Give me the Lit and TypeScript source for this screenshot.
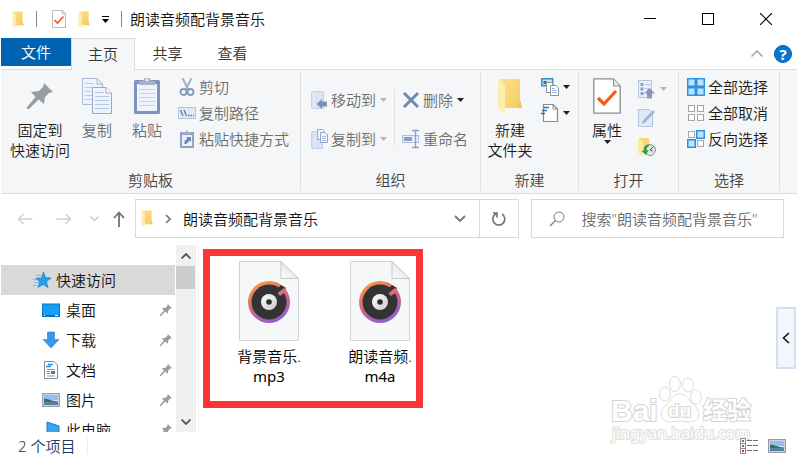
import { LitElement, html, svg, css, nothing, TemplateResult } from "lit";
import { customElement, property } from "lit/decorators.js";
import { classMap } from "lit/directives/class-map.js";

const FOLDER_NAME = "朗读音频配背景音乐";

const icon = (w: number, h: number, body: unknown) => html`
  <svg width=${w} height=${h} viewBox="0 0 ${w} ${h}" fill="none" aria-hidden="true">${body}</svg>`;

const folder = (w: number, h: number) => html`
  <svg width=${w} height=${h} viewBox="0 0 26 36" preserveAspectRatio="none" aria-hidden="true">
    <defs><linearGradient id="fo" x1="0" y1="0" x2="1" y2="1">
      <stop offset="0" stop-color="#ffe08a"></stop><stop offset="1" stop-color="#f3cb62"></stop>
    </linearGradient></defs>
    <path d="M3 1H23V23L25 30H8Z" fill="url(#fo)"></path>
    <path d="M1 1L8 7V36L1 31Z" fill="#ffedb0"></path>
    <path d="M23 22L25 30H21Z" fill="#ecc255"></path>
  </svg>`;

const caret = (color = "#1f1f1f") => icon(7, 4, svg`<path d="M0 0H7L3.5 4Z" fill=${color}/>`);

const propsPage = (w: number, h: number) => html`
  <svg width=${w} height=${h} viewBox="0 0 28 36" fill="none" aria-hidden="true">
    <path d="M.8 .8H20.5L27.2 8V35.2H.8Z" fill="#fff" stroke="#8c8c8c" stroke-width="1.3"></path>
    <path d="M20.5 1V8H27" fill="#e8e8e8" stroke="#8c8c8c"></path>
    <path d="M5 20L11 26L23 13" stroke="#f05a1a" stroke-width="3.2"></path>
  </svg>`;

const pinPath = "M17 0L26 9L22 10L18 14L17 21L11.500 16.500L2 26L0 26L0 24L8.500 14L4 9L12 8L16 4Z";
const pin = (s: number) => html`
  <svg width=${s} height=${s} viewBox="0 0 26 26" aria-hidden="true"><path d=${pinPath} fill="#959da5"></path></svg>`;

const copyBig = icon(32, 38, svg`
  <path d="M1.500 1.500H16L21.500 7V27.500H1.500Z" fill="#eef3fb" stroke="#a9b8d6"/>
  <path d="M16 1.500V7H21.500" stroke="#a9b8d6"/>
  <path d="M4 6.500H13M4 10.500H18M4 14.500H18M4 18.500H18M4 22.500H18" stroke="#b9cdea"/>
  <path d="M11.500 10.500H25L30.500 16V36.500H11.500Z" fill="#eef3fb" stroke="#98a9cb"/>
  <path d="M25 10.500V16H30.500" fill="#fff" stroke="#98a9cb"/>
  <path d="M14 15.500H23M14 19.500H28M14 23.500H28M14 27.500H28M14 31.500H28" stroke="#b0c6e6"/>`);

const clipboardBig = icon(28, 38, svg`
  <rect x="1" y="3" width="26" height="34" rx="1.500" fill="#7f94bb"/>
  <rect x="4" y="7" width="20" height="27" fill="#eef3fc"/>
  <path d="M6 12.500H22M6 16.500H22M6 20.500H22M6 24.500H22M6 28.500H22" stroke="#c5d3ea"/>
  <path d="M6 8V4H10L11.500 1H16.500L18 4H22V8Z" fill="#a5b2ca"/>
  <circle cx="14" cy="3" r="1.300" fill="#eef3fc"/>`);

const scissors = icon(18, 18, svg`
  <path d="M4.500 0L10.500 12M13.500 0L7.500 12" stroke="#a3b0c6" stroke-width="2"/>
  <circle cx="5.500" cy="14" r="3" stroke="#8497bd" stroke-width="1.800"/>
  <circle cx="12.500" cy="14" r="3" stroke="#8497bd" stroke-width="1.800"/>`);

const pathIcon = icon(18, 18, svg`
  <rect x=".5" y="3.500" width="17" height="11" fill="#dfe9f8" stroke="#b3c3e0"/>
  <path d="M2.500 6L5 12M6 6L8.500 12M10 11.500H11.500M12.500 11.500H14M15 11.500H16" stroke="#64779c" stroke-width="1.300"/>`);

const pasteLink = icon(18, 20, svg`
  <path d="M2 3H16V19H2Z" fill="#8fa2c7"/><path d="M4 6H14V17H4Z" fill="#eaf1fc"/>
  <path d="M5 5V3H7.500L9 1L10.500 3H13V5Z" fill="#a5b2ca"/>
  <path d="M6.500 15V12L9.500 9.500L8 8H13V13L11.500 11.500L8.500 15Z" fill="#6f86b2"/>`);

const moveTo = icon(18, 20, svg`
  <path d="M1.500 1.500H13.500V18.500H1.500Z" fill="#d9e4f5" stroke="#c3d2ea"/>
  <path d="M1.500 1.500L4 4V19" stroke="#edf3fc"/>
  <path d="M17 11.500V16.500H12V19L6.500 14L12 9V11.500Z" fill="#7d92b8"/>`);

const copyTo = icon(18, 20, svg`
  <path d="M1.500 2.500H12.500V19.500H1.500Z" fill="#d4e1f5" stroke="#c3d2ea"/>
  <path d="M5 4V19" stroke="#edf3fc"/>
  <path d="M7.500 .5H13L14.500 2.500V10.500H7.500Z" fill="#eef3fb" stroke="#9fb0d0"/>
  <path d="M10.500 3.500H15L17.500 6V13.500H10.500Z" fill="#f3f7fd" stroke="#93a5ca"/>
  <path d="M12 7.500H16M12 9.500H16M12 11.500H16" stroke="#a9bce0"/>`);

const cross = icon(18, 18, svg`<path d="M2 2L16 16M16 2L2 16" stroke="#7488b0" stroke-width="3"/>`);

const rename = icon(18, 20, svg`
  <rect x=".5" y="6.500" width="16" height="7" fill="#e6effb" stroke="#aebfdd"/>
  <rect x="2" y="8" width="8" height="4" fill="#8c9fc5"/>
  <path d="M10 1.500H13.500V18.500H10M17 1.500H13.500M13.500 18.500H17" stroke="#8c9fc5" stroke-width="1.400"/>`);

const newItem = icon(18, 18, svg`
  <rect x=".75" y=".75" width="11" height="7" fill="#bfe3f7" stroke="#3f8fbd" stroke-width="1.500"/>
  <rect x="2.500" y="3" width="3" height="3" fill="#3d6f8c"/>
  <path d="M5.500 4.500H11.500V14.500H5.500Z" fill="#fff" stroke="#8d9399"/>
  <path d="M9.500 7.500H15L17.500 10V17.500H9.500Z" fill="#fff" stroke="#8d9399"/>
  <path d="M11 10.500H14M11 12.500H16M11 14.500H16" stroke="#9cb9e8"/>`);

const easyAccess = icon(18, 18, svg`
  <path d="M2.500 .5H12L16.500 5V17.500H2.500Z" fill="#fff" stroke="#858b91" stroke-width="1.200"/>
  <path d="M12 .5V5H16.500" stroke="#858b91"/>
  <path d="M3 3.500H8M1 6.500H6M0 9.500H4" stroke="#2376b5" stroke-width="1.500"/>`);

const openIcon = icon(18, 20, svg`
  <rect x=".5" y="1.500" width="13" height="17" fill="#eaf0fa" stroke="#b4c3de"/>
  <path d="M2.500 4H5.500V7H2.500ZM2.500 8.500H5.500V11.500H2.500ZM2.500 13H5.500V16H2.500Z" fill="#8a9cc2"/>
  <path d="M7 5.500H12M7 9.500H12" stroke="#b4c3de"/>
  <path d="M11.500 9L17 14.500H14V19.500H9V14.500H6Z" fill="#8598bd"/>`);

const editIcon = icon(18, 20, svg`
  <path d="M.5 1.500H11L14.500 5V18.500H.5Z" fill="#dde8f8" stroke="#b4c3de"/>
  <path d="M4 16L5 12.500L15 2L17 4L7 14.500Z" fill="#a3b3d0"/>`);

const historyIcon = icon(18, 20, svg`
  <path d="M1 1H11V16H5Z" fill="#f8d777"/><path d="M0 1L5 4V19L0 16Z" fill="#ffe9a6"/>
  <circle cx="12" cy="13" r="5.500" fill="#dfe3e6" stroke="#8b9196"/>
  <path d="M12 13L15.500 9.500M12 13L14.500 14" stroke="#555" />
  <path d="M11 7.500C7.500 7.500 5 10 6 13.500L3.500 14L8 18L10.500 13L8.500 13.300C8.500 10.500 9.500 9.500 11 9.300Z" fill="#2ca33a"/>`);

const squares = (on: boolean[]) => icon(18, 18, on.map((sel, i) => {
  const x = (i % 2) * 9, y = Math.floor(i / 2) * 9;
  return sel
    ? svg`<rect x=${x + 0.75} y=${y + 0.75} width="7.500" height="7.500" fill="#bfe4ff" stroke="#2b92e4" stroke-width="1.500"/>`
    : svg`<rect x=${x + 1.5} y=${y + 1.5} width="6" height="6" fill="#fcfcfc" stroke="#a6a6a6"/>`;
}));

const star = icon(18, 18, svg`
  <path d="M10.500 1L12.500 6.500L18 7L13.500 10.800L15 16.500L10 13.500L5 16.500L6.500 10.800L3 7H8.500Z" fill="#2a9bea" stroke="#1679c4" stroke-width=".6"/>
  <path d="M3 4.500H8M0 8.500H4M1 11.500H6M0 14.500H4" stroke="#79bdf0"/>`);

const desktop = icon(18, 18, svg`
  <rect x=".5" y="3" width="17" height="12.500" fill="#15a0f5" stroke="#0b76c0"/>
  <path d="M1 14.500H17" stroke="#0869b0"/><path d="M2 14.500H3M13 14.500H16" stroke="#fff"/>`);

const download = icon(18, 18, svg`
  <path d="M5.500 1H12.500V8.500H17L9 17L1 8.500H5.500Z" fill="#3a96e6" stroke="#2a7fc9" stroke-width=".6"/>`);

const docIcon = icon(18, 18, svg`
  <path d="M2.500 .5H12L15.500 4V17.500H2.500Z" fill="#fff" stroke="#8b8b8b"/>
  <path d="M6 3.500H11M4 5.500H9" stroke="#2394dc" stroke-width="1.500"/>
  <path d="M5 8.500H13M5 10.500H8M5 12.500H8M5 15H13" stroke="#8795a5"/>
  <rect x="9" y="10" width="4" height="3" fill="#2b83c0"/>`);

const picture = icon(18, 18, svg`
  <rect x=".75" y="2.750" width="16.500" height="12.500" fill="#fff" stroke="#929292" stroke-width="1.300"/>
  <rect x="2" y="4" width="14" height="10" fill="#8fc0f5"/>
  <path d="M2 9H16V11H2Z" fill="#cfe6f8"/>
  <path d="M2 7.500C6 8 10 10 16 10.500V11.500H2Z" fill="#3f6e54"/><path d="M2 11.500H16V14H2Z" fill="#4b7fae"/>`);

const pc = icon(18, 18, svg`<path d="M5 1L17 5V16H5Z" fill="#3aa5ee" stroke="#1f7cc0"/>`);

const disc = html`
  <svg width="60" height="80" viewBox="0 0 60 80" fill="none" aria-hidden="true">
    <defs>
      <linearGradient id="ring" x1=".2" y1="0" x2=".7" y2="1">
        <stop offset="0" stop-color="#ff9a3d"></stop><stop offset=".5" stop-color="#d2687f"></stop>
        <stop offset="1" stop-color="#8560d8"></stop>
      </linearGradient>
      <linearGradient id="hub" x1="0" y1="0" x2="1" y2="1">
        <stop offset="0" stop-color="#fff"></stop><stop offset="1" stop-color="#c9c9c9"></stop>
      </linearGradient>
      <linearGradient id="fold" x1="0" y1="1" x2="1" y2="0">
        <stop offset="0" stop-color="#fdfdfd"></stop><stop offset="1" stop-color="#d9d9d9"></stop>
      </linearGradient>
    </defs>
    <path d="M.5 .5H42L59.500 18V79.500H.5Z" fill="#f6f7f8" stroke="#d3d4d5"></path>
    <path d="M42 .5V17.500H59.500Z" fill="url(#fold)" stroke="#c6c6c6"></path>
    <circle cx="30" cy="41" r="21" fill="url(#ring)"></circle>
    <circle cx="30" cy="41" r="17.500" fill="#333"></circle>
    <path d="M38 28.500L42 24L47 27L43 32Z" fill="#333"></path>
    <path d="M38.500 32L45 27L48 30L41 35Z" fill="#d9707d"></path>
    <circle cx="30" cy="41" r="8" fill="url(#hub)"></circle>
    <circle cx="30" cy="41" r="2.800" fill="#2b2b2b"></circle>
  </svg>`;

const shared = css`
  * { box-sizing: border-box; }
  button, input {
    font: inherit;
    color: inherit;
    background: none;
    border: 0;
    margin: 0;
    padding: 0;
  }
  svg { display: block; flex: none; }
`;

@customElement("ribbon-button")
class RibbonButton extends LitElement {
  @property({ attribute: false }) icon: TemplateResult | null = null;
  @property({ attribute: false }) lines: string[] = [];
  @property() label = "";
  @property({ type: Boolean }) big = false;
  @property({ type: Boolean }) menu = false;
  @property({ type: Boolean }) off = false;
  static styles = [shared, css`
    :host { display: block; }
    button { display: flex; align-items: center; height: 100%; gap: 3px; line-height: 20px; white-space: nowrap; }
    .off { color: #6d6d6d; }
    .big { flex-direction: column; gap: 0; padding: 8px 2px 0; min-width: 50px; height: auto; }
    .art { display: flex; align-items: center; justify-content: center; min-width: 18px; }
    .big .art { height: 38px; margin-bottom: 5px; }
    .line { display: block; }
    .menu { display: flex; padding-left: 1px; }
    .big .menu { padding: 0; }
  `];
  render() {
    return html`
      <button class=${classMap({ big: this.big, off: this.off })} ?disabled=${this.off} aria-label=${this.label || this.lines.join("")}>
        <span class="art">${this.icon}</span>
        ${this.lines.length ? html`<span>${this.lines.map((l) => html`<span class="line">${l}</span>`)}</span>` : nothing}
        ${this.menu ? html`<span class="menu">${caret(this.off ? "#b5b5b5" : "#1f1f1f")}</span>` : nothing}
      </button>`;
  }
}

@customElement("explorer-ribbon")
class ExplorerRibbon extends LitElement {
  static styles = [shared, css`
    :host {
      display: flex;
      background: #f5f6f7;
      border-top: 1px solid #d9dbdd;
      border-bottom: 1px solid #d9dbdd;
      height: 125px;
      padding: 2px 0;
      color: #1c1c1c;
    }
    section { display: flex; flex-direction: column; flex: none; border-right: 1px solid #dddfe1; }
    .tools { display: flex; flex: 1; margin-top: -3px; }
    h2 { margin: 0; padding-bottom: 1px; font-size: 15px; font-weight: inherit; line-height: 20px; text-align: center; color: #444; }
    .stack { display: grid; align-content: start; grid-auto-rows: 26px; padding-top: 5px; }
    .tall { grid-auto-rows: 29px; }
    .spread { row-gap: 13px; padding-top: 18px; }
    .rule { width: 1px; height: 56px; margin: 21px 7px 0; background: #dddfe1; }
    .clip { padding: 0 11px 0 7px; }
    .org { padding: 0 12px 0 9px; }
    .make { padding: 0 8px 0 4px; }
    .open { padding: 0 11px 0 3px; }
    .pick { padding: 0 11px 0 8px; }
    .next { margin-left: 6px; }
    .soft { color: #6d6d6d; }
  `];
  render() {
    return html`
      <section>
        <div class="tools clip">
          <ribbon-button big .icon=${pin(26)} .lines=${["固定到", "快速访问"]}></ribbon-button>
          <ribbon-button big off .icon=${copyBig} .lines=${["复制"]}></ribbon-button>
          <ribbon-button big off .icon=${clipboardBig} .lines=${["粘贴"]}></ribbon-button>
          <div class="stack next">
            <ribbon-button off .icon=${scissors} .lines=${["剪切"]}></ribbon-button>
            <ribbon-button off .icon=${pathIcon} .lines=${["复制路径"]}></ribbon-button>
            <ribbon-button off .icon=${pasteLink} .lines=${["粘贴快捷方式"]}></ribbon-button>
          </div>
        </div>
        <h2>剪贴板</h2>
      </section>
      <section>
        <div class="tools org">
          <div class="stack spread">
            <ribbon-button off menu .icon=${moveTo} .lines=${["移动到"]}></ribbon-button>
            <ribbon-button off menu .icon=${copyTo} .lines=${["复制到"]}></ribbon-button>
          </div>
          <div class="rule"></div>
          <div class="stack spread">
            <ribbon-button class="soft" menu .icon=${cross} .lines=${["删除"]}></ribbon-button>
            <ribbon-button off .icon=${rename} .lines=${["重命名"]}></ribbon-button>
          </div>
        </div>
        <h2>组织</h2>
      </section>
      <section>
        <div class="tools make">
          <ribbon-button big .icon=${folder(26, 36)} .lines=${["新建", "文件夹"]}></ribbon-button>
          <div class="stack next">
            <ribbon-button menu label="新建项目" .icon=${newItem}></ribbon-button>
            <ribbon-button menu label="轻松访问" .icon=${easyAccess}></ribbon-button>
          </div>
        </div>
        <h2>新建</h2>
      </section>
      <section>
        <div class="tools open">
          <ribbon-button big menu .icon=${propsPage(28, 36)} .lines=${["属性"]}></ribbon-button>
          <div class="stack tall next">
            <ribbon-button off menu label="打开" .icon=${openIcon}></ribbon-button>
            <ribbon-button off label="编辑" .icon=${editIcon}></ribbon-button>
            <ribbon-button label="历史记录" .icon=${historyIcon}></ribbon-button>
          </div>
        </div>
        <h2>打开</h2>
      </section>
      <section>
        <div class="tools pick">
          <div class="stack">
            <ribbon-button .icon=${squares([true, true, true, true])} .lines=${["全部选择"]}></ribbon-button>
            <ribbon-button .icon=${squares([false, false, false, false])} .lines=${["全部取消"]}></ribbon-button>
            <ribbon-button .icon=${squares([false, true, true, false])} .lines=${["反向选择"]}></ribbon-button>
          </div>
        </div>
        <h2>选择</h2>
      </section>`;
  }
}

@customElement("app-root")
class AppRoot extends LitElement {
  static styles = [shared, css`
    :host {
      display: flex;
      flex-direction: column;
      position: relative;
      height: 100vh;
      padding-left: 1px;
      overflow: hidden;
      background: #fff;
      color: #111;
      font: 350 15px/20px "Noto Sans", "Noto Sans CJK SC", sans-serif;
    }
    .title { display: flex; align-items: center; height: 38px; padding-left: 11px; flex: none; }
    .quick { display: flex; align-items: center; gap: 12px; }
    .bar { width: 1px; height: 16px; background: #8a8a8a; }
    .spaced { margin-right: 3px; }
    h1 { margin: 0 0 0 8px; font-size: 15px; font-weight: inherit; flex: 1; }
    .title .win { width: 58px; height: 38px; display: grid; place-items: center; }
    .title .win:last-child { margin-right: 2px; }

    .tabs { display: flex; height: 31px; flex: none; color: #333; }
    .tabs button { width: 65px; text-align: center; padding-bottom: 2px; }
    .tabs .file { width: 70px; height: 28px; background: #0063b1; color: #fff; padding: 0; }
    .tabs .active { width: 64px; height: 32px; background: #f5f6f7; border: 1px solid #d9dbdd; border-bottom: 0; position: relative; }
    .help { display: flex; align-items: center; gap: 11px; margin-left: auto; padding-right: 5px; }
    .tabs .help button { width: auto; padding: 0; }
    .tabs .help .q { width: 18px; height: 18px; border-radius: 50%; background: #0a74d1; color: #fff; font-weight: 700; border: 1px solid #0a5cad; line-height: 16px; }

    .nav { display: flex; height: 51px; padding: 5px 13px 7px 4px; flex: none; }
    .nav button { display: grid; place-items: center; }
    .arrow { width: 39px; }
    .recent { width: 22px; }
    .up { width: 28px; margin-right: 2px; }
    .address { display: flex; flex: 3 1 194px; border: 1px solid #d9d9d9; min-width: 0; }
    .crumb { display: flex; align-items: center; flex: 1; padding-left: 5px; gap: 12px; min-width: 0; }
    .address .drop { width: 37px; }
    .address .reload { width: 39px; border-left: 1px solid #d9d9d9; }
    .search { display: flex; align-items: center; flex: 2 1 127px; min-width: 0; border: 1px solid #d9d9d9; margin-left: 12px; padding-left: 17px; gap: 17px; }
    .search input { flex: 1; min-width: 0; outline: 0; }
    .search input::placeholder { color: #6a6a6a; opacity: 1; }

    .body { display: flex; flex: 1; min-height: 0; }
    .tree { width: 175px; padding-top: 20px; overflow: hidden; flex: none; }
    .tree ul { list-style: none; margin: 0; padding: 0; }
    .tree a { display: flex; align-items: center; height: 30px; gap: 6px; padding: 0 4px 0 41px; color: inherit; text-decoration: none; }
    .tree .root { background: #d9d9d9; padding-left: 32px; gap: 5px; margin-right: 1px; }
    .tree .pin { margin-left: auto; }
    .scroll { display: flex; flex-direction: column; width: 20px; background: #f0f0f0; flex: none; }
    .scroll button { height: 21px; display: grid; place-items: center; }
    .thumb { height: 23px; margin-right: 1px; background: #cdcdcd; }
    .scroll .down { margin-top: auto; }
    .files { flex: 1; min-width: 0; margin-left: 2px; border-left: 1px solid #f4f4f4; padding: 4px; }
    .marked { display: inline-flex; gap: 41px; border: 7px solid #fc3636; padding: 5px 1px 15px 24px; }
    figure { margin: 0; width: 70px; display: flex; flex-direction: column; align-items: center; gap: 5px; }
    figcaption { text-align: center; color: #000; }
    figcaption span { display: block; }
    .ext { font-weight: 400; }

    .status { display: flex; align-items: center; height: 30px; padding: 0 11px 2px 17px; flex: none; color: #1e395b; }
    .count { padding-right: 12px; border-right: 1px solid #ececec; line-height: 16px; }
    .views { display: flex; align-items: center; gap: 10px; margin-left: auto; position: relative; z-index: 1; }

    .flyout { position: absolute; right: 1px; top: 307px; width: 20px; height: 62px; display: grid; place-items: center; background: #f3f7fd; border: 2px solid #cfe0f5; }
    .mark { position: absolute; right: 36px; bottom: 14px; }
    .mark text { fill: #fff; stroke: #d4d4d4; stroke-width: 2px; paint-order: stroke; font-family: "Noto Sans CJK SC", sans-serif; font-weight: 700; }
    .mark .latin { font-family: "Liberation Sans", sans-serif; }
    .mark .site { font-family: "Noto Sans", sans-serif; font-weight: 400; stroke: #dedede; }
    .paw { fill: #fff; stroke: #dcdcdc; stroke-width: 1px; }
  `];

  private places: [string, TemplateResult][] = [
    ["桌面", desktop],
    ["下载", download],
    ["文档", docIcon],
    ["图片", picture],
    ["此电脑", pc],
  ];
  private files: [string, string][] = [["背景音乐.", "mp3"], ["朗读音频.", "m4a"]];

  render() {
    return html`
      <header class="title">
        <div class="quick">
          ${folder(12, 17)}<span class="bar spaced"></span>${propsPage(14, 18)}${folder(12, 17)}
          <button aria-label="自定义快速访问工具栏">${icon(7, 8, svg`<path d="M0 1.500H7" stroke="#000"/><path d="M0 4H7L3.500 8Z" fill="#000"/>`)}</button>
          <span class="bar"></span>
        </div>
        <h1>${FOLDER_NAME}</h1>
        <button class="win" aria-label="最小化">${icon(12, 12, svg`<path d="M0 5.500H12" stroke="#000"/>`)}</button>
        <button class="win" aria-label="最大化">${icon(12, 12, svg`<rect x=".5" y=".5" width="11" height="11" stroke="#000"/>`)}</button>
        <button class="win" aria-label="关闭">${icon(12, 12, svg`<path d="M0 0L12 12M12 0L0 12" stroke="#000" stroke-width="1.200"/>`)}</button>
      </header>
      <nav class="tabs">
        <button class="file">文件</button><button class="active">主页</button><button>共享</button><button>查看</button>
        <div class="help">
          <button aria-label="折叠功能区">${icon(12, 7, svg`<path d="M.5 6.500L6 1L11.500 6.500" stroke="#9a9a9a" stroke-width="1.300"/>`)}</button>
          <button class="q">?</button>
        </div>
      </nav>
      <explorer-ribbon></explorer-ribbon>
      <div class="nav">
        <button class="arrow" aria-label="后退">${icon(16, 12, svg`<path d="M15.500 6H1.500M6.500 1L1.500 6L6.500 11" stroke="#d0d0d0" stroke-width="1.500"/>`)}</button>
        <button class="arrow" aria-label="前进">${icon(16, 12, svg`<path d="M.5 6H14.500M9.500 1L14.500 6L9.500 11" stroke="#d0d0d0" stroke-width="1.500"/>`)}</button>
        <button class="recent" aria-label="最近位置">${icon(9, 6, svg`<path d="M.5 .5L4.500 4.500L8.500 .5" stroke="#c9c9c9" stroke-width="1.500"/>`)}</button>
        <button class="up" aria-label="向上">${icon(12, 16, svg`<path d="M6 16V1.500M1 7L6 1.500L11 7" stroke="#707070" stroke-width="1.800"/>`)}</button>
        <div class="address">
          <div class="crumb">${folder(12, 17)}${icon(6, 10, svg`<path d="M1 1L5 5L1 9" stroke="#777" stroke-width="1.700"/>`)}<span>${FOLDER_NAME}</span></div>
          <button class="drop" aria-label="历史位置">${icon(12, 8, svg`<path d="M1 1L6 6L11 1" stroke="#757575" stroke-width="1.800"/>`)}</button>
          <button class="reload" aria-label="刷新">${icon(16, 16, svg`<path d="M11 3A6 6 0 1 1 5 2.800M2 2H6V6.500" stroke="#757575" stroke-width="1.700"/>`)}</button>
        </div>
        <label class="search">
          ${icon(16, 16, svg`<circle cx="10" cy="6" r="5" stroke="#7b7b7b"/><path d="M6.500 9.500L1 15" stroke="#7b7b7b" stroke-width="1.200"/>`)}
          <input type="text" aria-label="搜索" placeholder=${`搜索"${FOLDER_NAME}"`} />
        </label>
      </div>
      <div class="body">
        <nav class="tree">
          <a class="root" href="#quick">${star}快速访问</a>
          <ul>${this.places.map(([name, art]) => html`<li><a href="#${name}">${art}<span>${name}</span><span class="pin">${pin(12)}</span></a></li>`)}</ul>
        </nav>
        <div class="scroll">
          <button aria-label="向上滚动">${icon(10, 6, svg`<path d="M.5 5.500L5 1L9.500 5.500" stroke="#555" stroke-width="1.800"/>`)}</button>
          <div class="thumb"></div>
          <button class="down" aria-label="向下滚动">${icon(10, 6, svg`<path d="M.5 .5L5 5L9.500 .5" stroke="#555" stroke-width="1.800"/>`)}</button>
        </div>
        <main class="files">
          <div class="marked">
            ${this.files.map(([stem, ext]) => html`
              <figure>${disc}<figcaption><span>${stem}</span><span class="ext">${ext}</span></figcaption></figure>`)}
          </div>
        </main>
      </div>
      <footer class="status">
        <span class="count">2 个项目</span>
        <div class="views">
          <button aria-label="详细信息">${icon(18, 16, svg`
            <path d="M.5 .5H5.500V15.500H.5ZM.5 5.500H5.500M.5 10.500H5.500" fill="#fff" stroke="#8e8e8e"/>
            <rect x="2" y="2" width="2" height="2" fill="#2f7fd0"/><rect x="2" y="7" width="2" height="2" fill="#6b7f4a"/><rect x="2" y="12" width="2" height="2" fill="#d33"/>
            <path d="M7 2.500H12M13 2.500H18M7 7.500H12M13 7.500H18M7 12.500H12M13 12.500H18" stroke="#6f6f6f"/>`)}</button>
          <button aria-label="大图标">${picture}</button>
        </div>
      </footer>
      <button class="flyout" aria-label="展开">${icon(8, 12, svg`<path d="M7 1L1.500 6L7 11" stroke="#111" stroke-width="1.600"/>`)}</button>
      <svg class="mark" width="152" height="74" viewBox="0 0 152 74" aria-hidden="true">
        <g class="paw">
          <ellipse cx="56" cy="20" rx="5.500" ry="7"></ellipse><ellipse cx="66" cy="10" rx="5.500" ry="7.500"></ellipse>
          <ellipse cx="79" cy="11" rx="5.500" ry="7"></ellipse><ellipse cx="87" cy="23" rx="5.500" ry="7"></ellipse>
          <path d="M71 20C79 20 80 28 86 32C93 38 90 48 81 48C76 48 74 47 71 47C68 47 65 48 61 48C52 48 49 38 57 31C62 27 64 20 71 20Z"></path>
        </g>
        <text class="latin" x="2" y="47" font-size="30">Bai</text>
        <text class="latin" x="59" y="43" font-size="19">du</text>
        <text x="94" y="45" font-size="24">经验</text>
        <text class="site" x="3" y="65" font-size="16">jingyan.baidu.com</text>
      </svg>`;
  }
}
